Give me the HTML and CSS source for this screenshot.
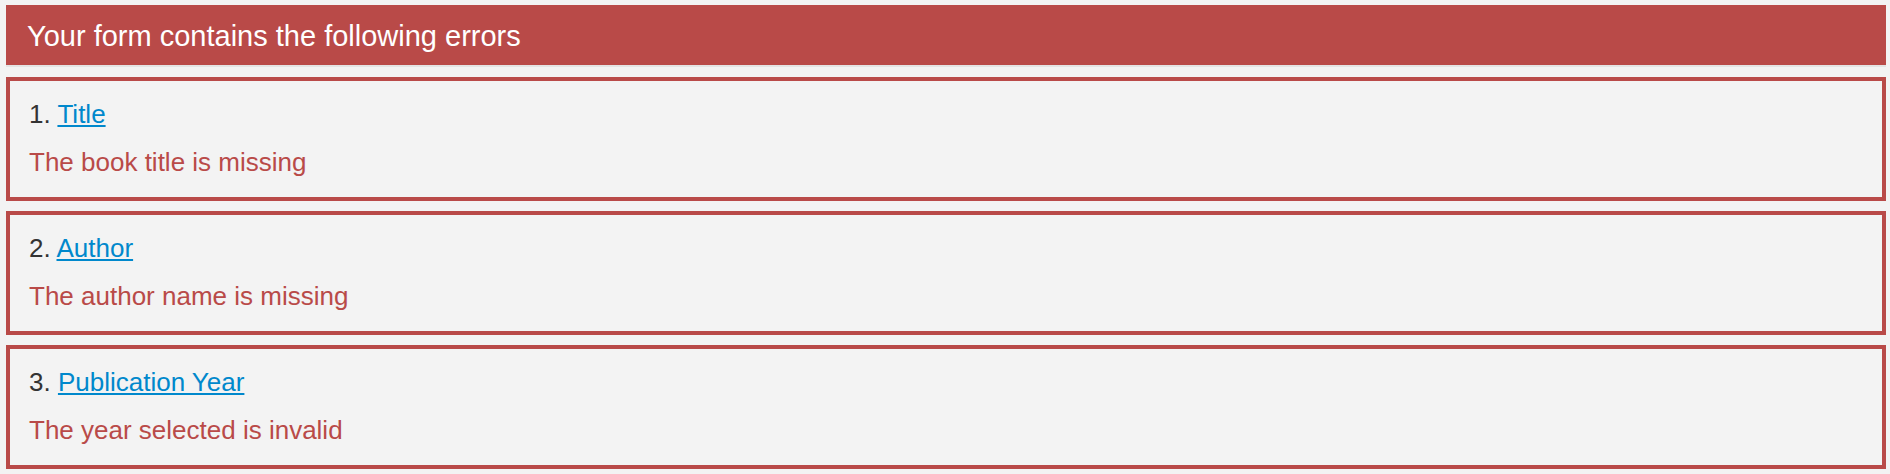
FILE: index.html
```html
<!DOCTYPE html>
<html lang="en">
<head>
<meta charset="utf-8">
<title>Form errors</title>
<link rel="stylesheet" href="styles.css">
</head>
<body>
  <div class="errors">
    <div class="errors-header">Your form contains the following errors</div>
    <div class="error-list">
      <div class="error-item">
        <div class="error-field">1. <a href="#title">Title</a></div>
        <div class="error-msg">The book title is missing</div>
      </div>
      <div class="error-item">
        <div class="error-field">2. <a href="#author">Author</a></div>
        <div class="error-msg">The author name is missing</div>
      </div>
      <div class="error-item">
        <div class="error-field">3. <a href="#year">Publication Year</a></div>
        <div class="error-msg">The year selected is invalid</div>
      </div>
    </div>
  </div>
</body>
</html>
```

FILE: styles.css
```css
html {
  background: #f3f3f3;
}
body {
  margin: 5px 4px 5px 6px;
  font-family: "Liberation Sans", Arial, Helvetica, sans-serif;
  background: #f3f3f3;
}
.errors {
  display: flex;
  flex-direction: column;
  gap: 12px;
}
.errors-header {
  background: #b94a48;
  color: #ffffff;
  font-size: 29px;
  line-height: 40px;
  padding: 11px 20px 9px 21px;
  box-shadow: 0 2px 0 #e4e4e4;
}
.error-list {
  display: flex;
  flex-direction: column;
  gap: 10px;
}
.error-item {
  border: 4px solid #b94a48;
  padding: 15px 19px 17px;
  display: flex;
  flex-direction: column;
  gap: 12px;
  font-size: 26px;
  line-height: 36px;
}
.error-field {
  color: #333333;
}
.error-field a {
  color: #0088cc;
  text-decoration: underline;
}
.error-msg {
  color: #b94a48;
}
```
